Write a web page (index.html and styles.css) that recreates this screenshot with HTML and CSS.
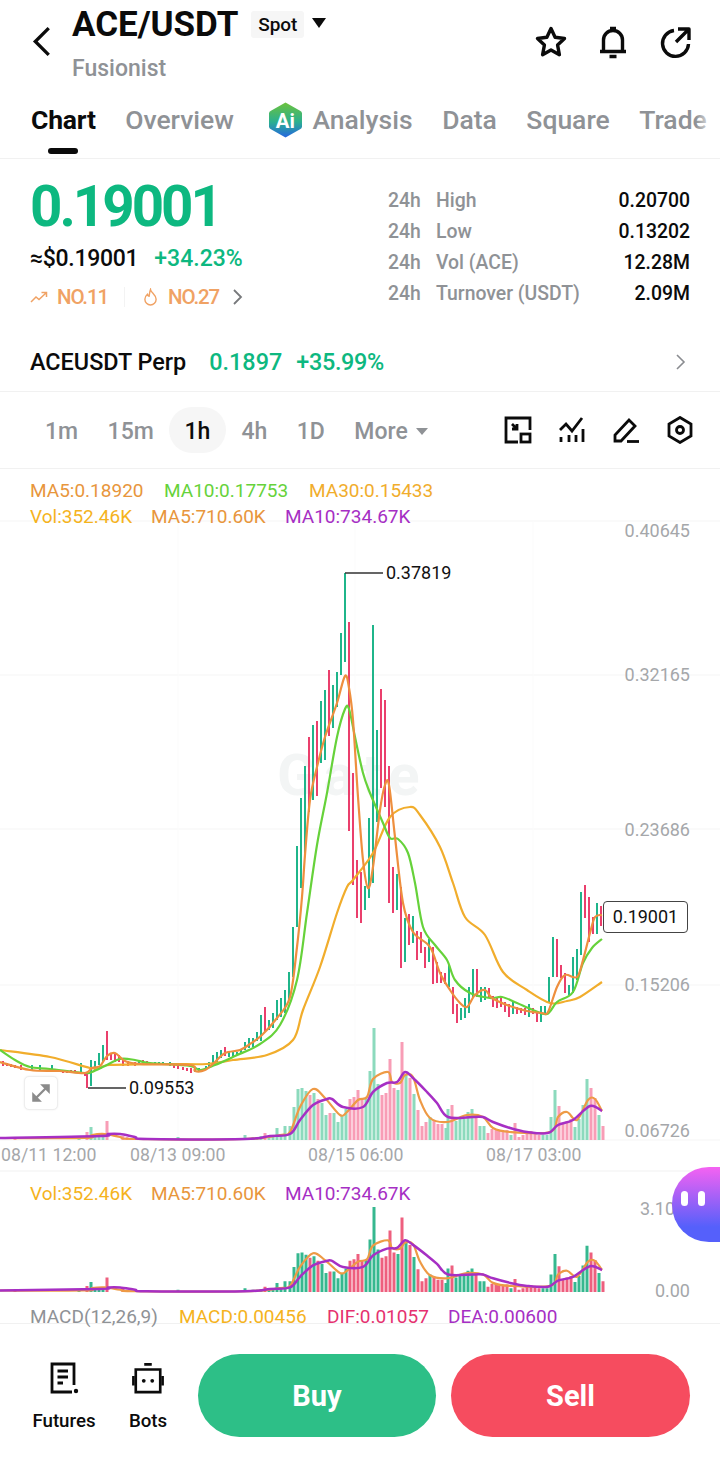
FILE: index.html
```html
<!DOCTYPE html>
<html lang="en">
<head>
  <meta charset="UTF-8">
  <meta name="viewport" content="width=device-width, initial-scale=1.0">
  <title>ACE/USDT</title>
  <link rel="stylesheet" href="styles.css">
</head>
<body>
  <header class="top-bar">
    <svg class="back" viewBox="0 0 18 30"><path d="M16 2 3 15l13 13"/></svg>
    <div class="pair">
      <div class="pair-line">
        <h1>ACE/USDT</h1>
        <span class="badge">Spot</span>
        <span class="caret"></span>
      </div>
      <div class="pair-name">Fusionist</div>
    </div>
    <div class="top-icons">
      <svg viewBox="0 0 34 34"><path d="M17 3.500l4.100 8.800 9.400 1.200-6.900 6.600 1.800 9.600-8.400-4.700-8.400 4.700 1.800-9.600-6.900-6.600 9.400-1.200z"/></svg>
      <svg viewBox="0 0 34 34"><path d="M4 26.500h26M7.500 26.500V15a9.500 9.500 0 0 1 19 0v11.500"/><path d="M14 3.500h6M13.500 31.500h7"/></svg>
      <svg viewBox="0 0 34 34"><path d="M16 5.500a13 13 0 1 0 14.500 13.500"/><path d="M20 4h11v11M30.500 4.500 18 17"/></svg>
    </div>
  </header>

  <nav class="tabs">
    <a class="tab active">Chart</a>
    <a class="tab">Overview</a>
    <a class="tab tab-ai">
      <svg class="ai-icon" viewBox="0 0 34 36">
        <defs>
          <linearGradient id="ai-grad" x1="0" y1="0" x2="0" y2="1">
            <stop offset="0" stop-color="#6cc23c"/>
            <stop offset=".55" stop-color="#2bb08f"/>
            <stop offset="1" stop-color="#2566e0"/>
          </linearGradient>
        </defs>
        <path class="ai-hex" d="M17 0l15 8.500a3 3 0 0 1 2 3v13a3 3 0 0 1-2 3L17 36 2 27.500a3 3 0 0 1-2-3v-13a3 3 0 0 1 2-3z"/>
        <text class="ai-text" x="7" y="26">Ai</text>
      </svg>
      Analysis
    </a>
    <a class="tab">Data</a>
    <a class="tab">Square</a>
    <a class="tab">Trade</a>
  </nav>

  <section class="summary">
    <div class="price-box">
      <div class="price">0.19001</div>
      <div class="price-sub"><span class="fiat">≈$0.19001</span><span class="change">+34.23%</span></div>
      <div class="ranks">
        <svg class="rank-icon" viewBox="0 0 18 14"><path d="M1 12l5-5 3 2.500L16 3M11.500 2.500H16.500V7"/></svg>
        <span>NO.11</span>
        <i class="rank-sep"></i>
        <svg class="rank-icon flame" viewBox="0 0 16 18"><path d="M8 1c.5 3.500 6 5.500 6 10.500a6 6 0 0 1-12 0c0-2.500 1.200-4.200 2.700-5.500.4 1.300 1 2 1.800 2.200C7 5.500 7 3.500 8 1z"/></svg>
        <span>NO.27</span>
        <svg class="rank-more" viewBox="0 0 12 18"><path d="M2 2l7 7-7 7"/></svg>
      </div>
    </div>
    <dl class="stats">
      <div class="stat"><span>24h</span><span>High</span><b>0.20700</b></div>
      <div class="stat"><span>24h</span><span>Low</span><b>0.13202</b></div>
      <div class="stat"><span>24h</span><span>Vol (ACE)</span><b>12.28M</b></div>
      <div class="stat"><span>24h</span><span>Turnover (USDT)</span><b>2.09M</b></div>
    </dl>
  </section>

  <section class="perp">
    <span class="perp-name">ACEUSDT Perp</span>
    <span class="perp-price">0.1897</span>
    <span class="perp-change">+35.99%</span>
    <svg class="perp-more" viewBox="0 0 12 18"><path d="M2 2l7 7-7 7"/></svg>
  </section>

  <section class="toolbar">
    <div class="intervals">
      <a>1m</a>
      <a>15m</a>
      <a class="on">1h</a>
      <a>4h</a>
      <a>1D</a>
      <a class="more">More<i></i></a>
    </div>
    <div class="tools">
      <svg viewBox="0 0 28 28"><path d="M14 26H2V2h24v12"/><path d="M8 8l5 5M13 8v5H8"/><rect x="17" y="18" width="9" height="8"/></svg>
      <svg viewBox="0 0 28 28"><path d="M2 14l6-6 6 7 10-13"/><path d="M3 21v5M11 19v7M18 19v7M25 13v13"/></svg>
      <svg viewBox="0 0 28 28"><path d="M3 25v-6L17 4l6 6L9 25z"/><path d="M15 25.500h12"/></svg>
      <svg viewBox="0 0 28 28"><path d="M14 1.500l11 6.500v12l-11 6.500L3 20V8z"/><circle cx="14" cy="14" r="3.500"/></svg>
    </div>
  </section>

  <section class="chart">
    <svg class="chart-svg" viewBox="0 469 720 855">
      <defs>
        <g id="vol">
          <path class="vol-up" d="M79 1140V1137M91 1140V1127M95 1140V1135M99 1140V1137M103 1140V1137M178 1140V1137M245 1140V1135M253 1140V1137M257 1140V1137M261 1140V1136M269 1140V1136M273 1140V1136M277 1140V1128M281 1140V1134M285 1140V1126M290 1140V1126M294 1140V1107M298 1140V1089M302 1140V1088M306 1140V1091M314 1140V1093M322 1140V1103M326 1140V1115M334 1140V1113M338 1140V1122M342 1140V1115M346 1140V1109M366 1140V1098M370 1140V1071M374 1140V1028M378 1140V1084M398 1140V1090M406 1140V1075M414 1140V1094M430 1140V1117M446 1140V1128M448 1140V1109M456 1140V1121M460 1140V1119M464 1140V1119M468 1140V1112M472 1140V1109M480 1140V1126M484 1140V1126M511 1140V1135M543 1140V1135M547 1140V1135M551 1140V1117M555 1140V1090M575 1140V1127M579 1140V1119M583 1140V1105M587 1140V1079M599 1140V1115"/>
          <path class="vol-down" d="M15 1140V1137M87 1140V1132M107 1140V1121M123 1140V1136M127 1140V1137M265 1140V1133M310 1140V1095M318 1140V1099M330 1140V1113M350 1140V1099M354 1140V1097M358 1140V1090M362 1140V1098M382 1140V1095M386 1140V1093M390 1140V1059M394 1140V1088M402 1140V1042M410 1140V1078M418 1140V1110M422 1140V1126M426 1140V1122M434 1140V1120M438 1140V1124M442 1140V1124M452 1140V1105M476 1140V1117M488 1140V1133M492 1140V1129M496 1140V1129M499 1140V1131M503 1140V1132M507 1140V1130M515 1140V1123M519 1140V1137M523 1140V1135M527 1140V1133M531 1140V1131M535 1140V1133M539 1140V1135M559 1140V1106M563 1140V1123M567 1140V1121M571 1140V1119M591 1140V1088M595 1140V1098M603 1140V1126"/>
          <polyline class="line vol-ma5" points="0,1138 85,1138 92,1135 105,1134 120,1137 135,1139 245,1139 280,1135 290,1132 300,1107 313,1089 325,1098 340,1115 347,1112 358,1100 367,1097 373,1079 388,1072 392,1082 400,1083 405,1075 413,1077 420,1100 430,1118 447,1122 467,1115 483,1117 493,1128 510,1132 550,1132 558,1117 567,1112 577,1120 588,1100 595,1099 602,1111"/>
          <polyline class="line vol-ma10" points="0,1138 100,1136 108,1134 120,1134 135,1137 147,1139 245,1139 270,1136 290,1134 300,1120 313,1105 327,1099 332,1099 343,1107 363,1107 373,1092 387,1083 397,1082 405,1072 413,1078 427,1092 437,1103 448,1117 473,1117 483,1117 493,1122 510,1128 527,1132 548,1133 558,1125 573,1120 590,1106 602,1111"/>
        </g>
      </defs>

      <path class="grid" d="M0 521H720M0 675H720M0 829H720M0 985H720M0 1140H720"/>
      <path class="grid-v" d="M178 521V1140M355 521V1140M533 521V1140"/>
      <path class="divider" d="M0 1171H720"/>
      <text class="watermark" x="277" y="795">Gate</text>

      <path class="up" d="M32 1065V1070M40 1065V1070M52 1065V1069M81 1063V1072M91 1060V1086M95 1061V1070M99 1053V1065M103 1045V1062M139 1061V1065M155 1062V1065M159 1062V1064M163 1062V1065M170 1062V1066M195 1068V1072M199 1068V1071M206 1066V1068M209 1062V1067M213 1055V1065M217 1052V1062M221 1050V1058M229 1052V1057M233 1052V1057M237 1052V1055M241 1049V1054M245 1042V1050M249 1038V1048M253 1038V1047M257 1032V1041M261 1015V1041M269 1020V1030M273 1013V1028M277 1000V1020M281 998V1017M285 990V1013M289 972V1000M293 927V977M297 846V927M301 798V888M305 766V855M313 725V800M321 701V763M325 690V760M333 685V728M337 672V707M341 633V675M345 573V662M365 886V910M369 818V898M373 625V883M377 730V822M397 874V910M405 918V962M413 916V943M429 939V962M449 965V987M461 1008V1020M465 998V1018M469 987V1013M473 969V997M481 987V1002M485 987V1000M513 1002V1014M529 1004V1017M541 1006V1022M545 1006V1015M549 977V1003M553 937V977M569 985V995M573 957V993M577 949V980M581 892V955M597 903V934"/>
      <path class="down" d="M3 1061V1066M7 1063V1066M11 1064V1067M15 1065V1068M21 1065V1070M63 1070V1073M67 1070V1073M71 1070V1073M75 1070V1073M85 1073V1076M87 1073V1088M107 1031V1060M111 1053V1060M115 1053V1062M119 1055V1062M123 1060V1066M128 1061V1066M135 1062V1066M143 1060V1065M147 1061V1064M174 1065V1068M178 1066V1069M183 1067V1070M187 1068V1071M191 1068V1073M225 1047V1056M265 1007V1032M309 737V812M317 721V796M329 670V736M349 622V831M353 773V885M357 860V918M361 872V923M381 689V788M385 700V807M389 766V903M393 867V913M401 887V968M409 914V945M417 931V960M421 932V953M425 947V968M433 947V984M437 962V983M441 972V983M445 973V984M453 987V1014M457 1004V1023M477 969V997M489 988V998M493 996V1007M497 998V1008M501 998V1007M505 1002V1012M509 1004V1017M517 1007V1014M521 1008V1013M525 1008V1015M533 1008V1014M537 1012V1022M557 939V977M561 965V978M565 973V993M585 885V918M589 897V942M593 917V934M601 906V926"/>

      <polyline class="line ma30" points="0,1050 50,1057 90,1068 100,1068 110,1065 167,1064 207,1064 233,1060 267,1055 293,1040 303,1010 320,967 337,913 347,887 353,880 373,853 390,817 410,807 420,815 440,847 453,883 465,917 485,935 503,972 527,990 550,1003 567,1001 580,997 602,982"/>
      <polyline class="line ma10" points="0,1050 15,1060 30,1067 50,1069 85,1073 92,1072 105,1066 120,1059 135,1060 150,1063 190,1066 200,1070 215,1065 235,1056 260,1044 280,1025 297,980 307,913 317,845 327,793 337,737 345,709 349,709 355,737 363,773 370,793 383,823 390,838 398,839 408,853 415,883 423,927 435,945 447,960 455,980 470,993 490,998 502,997 517,1003 533,1010 547,1014 557,1002 573,992 583,963 592,948 602,939"/>
      <polyline class="line ma5" points="0,1062 30,1070 60,1071 85,1073 92,1068 100,1066 107,1056 115,1053 125,1061 140,1064 190,1065 195,1071 205,1070 215,1062 225,1053 240,1050 250,1044 262,1035 277,1018 290,997 297,947 302,897 305,855 310,800 317,767 325,737 337,703 345,676 349,688 353,720 358,797 363,860 368,888 373,867 380,810 385,785 389,785 395,837 403,903 413,932 430,947 440,973 450,990 460,1003 467,1007 475,995 485,990 492,998 507,1005 527,1011 542,1013 548,1012 557,987 565,975 577,977 583,960 590,933 595,917 602,915"/>

      <use href="#vol" class="vol-main"/>
      <use href="#vol" class="vol-sub" transform="translate(0 425.600) scale(1 .76)"/>

      <path class="callout" d="M383 573H345M126 1088H88"/>
      <text class="label" x="386" y="579">0.37819</text>
      <text class="label" x="129" y="1094">0.09553</text>

      <text class="legend c-ma5" x="30" y="497">MA5:0.18920</text>
      <text class="legend c-ma10" x="164" y="497">MA10:0.17753</text>
      <text class="legend c-ma30" x="309" y="497">MA30:0.15433</text>
      <text class="legend c-vol" x="30" y="523">Vol:352.46K</text>
      <text class="legend c-ma5" x="151" y="523">MA5:710.60K</text>
      <text class="legend c-purple" x="285" y="523">MA10:734.67K</text>

      <text class="axis" x="690" y="537" text-anchor="end">0.40645</text>
      <text class="axis" x="690" y="681" text-anchor="end">0.32165</text>
      <text class="axis" x="690" y="836" text-anchor="end">0.23686</text>
      <text class="axis" x="690" y="991" text-anchor="end">0.15206</text>
      <text class="axis" x="690" y="1137" text-anchor="end">0.06726</text>

      <text class="axis time" x="1" y="1161">08/11 12:00</text>
      <text class="axis time" x="130" y="1161">08/13 09:00</text>
      <text class="axis time" x="308" y="1161">08/15 06:00</text>
      <text class="axis time" x="486" y="1161">08/17 03:00</text>

      <text class="legend c-vol" x="30" y="1200">Vol:352.46K</text>
      <text class="legend c-ma5" x="151" y="1200">MA5:710.60K</text>
      <text class="legend c-purple" x="285" y="1200">MA10:734.67K</text>
      <text class="axis" x="640" y="1215">3.10</text>
      <text class="axis" x="690" y="1297" text-anchor="end">0.00</text>

      <text class="legend c-grey" x="30" y="1323">MACD(12,26,9)</text>
      <text class="legend c-vol" x="179" y="1323">MACD:0.00456</text>
      <text class="legend c-pink" x="327" y="1323">DIF:0.01057</text>
      <text class="legend c-purple" x="448" y="1323">DEA:0.00600</text>
    </svg>

    <div class="last-price">0.19001</div>
    <button class="expand">
      <svg viewBox="0 0 20 20"><path d="M12 1.500h6.500V8zM8 18.500H1.500V12z"/><path d="M15 5 5 15"/></svg>
    </button>
    <div class="bubble"><i></i><i></i></div>
  </section>

  <footer class="actions">
    <a class="action">
      <svg viewBox="0 0 32 34"><path d="M26 24V3H4v28h20"/><path d="M9.500 10H20M9.500 16H20M9.500 22H15"/><circle cx="28" cy="30" r="2.200" class="dot"/></svg>
      Futures
    </a>
    <a class="action">
      <svg viewBox="0 0 34 34"><path d="M4 8h26v24H4z"/><path d="M13 2.500h8M1.500 15v10M32.500 15v10"/><circle cx="12.500" cy="20" r="2" class="dot"/><circle cx="21.500" cy="20" r="2" class="dot"/></svg>
      Bots
    </a>
    <button class="trade buy">Buy</button>
    <button class="trade sell">Sell</button>
  </footer>
  <script src="chart.js"></script>
</body>
</html>
```

FILE: styles.css
```css
:root {
  --green: #0db880;
  --grey: #8f9296;
  --orange: #f0a264;
  --border: #f1f1f1;
}
* {
  box-sizing: border-box;
}
body {
  margin: 0;
  width: 720px;
  height: 1467px;
  overflow: hidden;
  background: #fff;
  color: #0b0b0b;
  font-family: Roboto, "Liberation Sans", sans-serif;
}
a {
  text-decoration: none;
}

/* top bar */
.top-bar {
  height: 96px;
  display: flex;
  padding-left: 32px;
  position: relative;
}
.back {
  width: 19px;
  height: 31px;
  margin-top: 26px;
  fill: none;
  stroke: #0b0b0b;
  stroke-width: 3.200;
}
.pair {
  margin-left: 21px;
}
.pair-line {
  display: flex;
  align-items: center;
  height: 49px;
}
h1 {
  margin: 0;
  font-size: 35px;
  font-weight: 700;
  letter-spacing: -0.05px;
}
.badge {
  margin-left: 13px;
  width: 53px;
  height: 27px;
  background: #f6f6f6;
  border-radius: 3px;
  font-size: 19px;
  font-weight: 500;
  line-height: 27px;
  text-align: center;
}
.caret {
  margin-left: 8px;
  margin-top: -3px;
  border-left: 7.500px solid transparent;
  border-right: 7.500px solid transparent;
  border-top: 10px solid #0b0b0b;
}
.pair-name {
  margin-top: 6px;
  font-size: 23px;
  font-weight: 500;
  color: var(--grey);
}
.top-icons {
  margin-left: auto;
  margin-right: 28px;
  margin-top: 25px;
  display: flex;
  gap: 28px;
}
.top-icons svg {
  width: 34px;
  height: 34px;
  fill: none;
  stroke: #0b0b0b;
  stroke-width: 3.400;
  stroke-linejoin: round;
}

/* tabs */
.tabs {
  height: 63px;
  display: flex;
  align-items: flex-start;
  gap: 29.500px;
  padding: 6px 0 0 31px;
  border-bottom: 1px solid var(--border);
  position: relative;
  overflow: hidden;
  white-space: nowrap;
}
.tabs::after {
  content: "";
  position: absolute;
  right: 0;
  top: 0;
  bottom: 0;
  width: 24px;
  background: linear-gradient(to right, rgba(255, 255, 255, 0), #fff 80%);
}
.tab {
  font-size: 26.500px;
  font-weight: 500;
  line-height: 36px;
  color: var(--grey);
  position: relative;
}
.tab.active {
  color: #0b0b0b;
  font-weight: 700;
  letter-spacing: -0.2px;
}
.tab.active::after {
  content: "";
  position: absolute;
  left: 17px;
  top: 46px;
  width: 30px;
  height: 6px;
  border-radius: 3px;
  background: #0b0b0b;
}
.tab-ai {
  display: flex;
  align-items: center;
  gap: 10px;
  margin-left: 6px;
}
.ai-icon {
  width: 33px;
  height: 36px;
}
.ai-hex {
  fill: url(#ai-grad);
}
.ai-text {
  fill: #fff;
  font-size: 21px;
  font-weight: 700;
}

/* price summary */
.summary {
  height: 171px;
  display: flex;
  justify-content: space-between;
  padding: 0 30px;
}
.price {
  margin-top: 14px;
  font-size: 56.500px;
  font-weight: 700;
  line-height: 68px;
  letter-spacing: -3px;
  color: var(--green);
}
.price-sub {
  margin-top: 3px;
  display: flex;
  gap: 16px;
  font-size: 23px;
  line-height: 30px;
}
.fiat {
  font-weight: 500;
  letter-spacing: -0.3px;
}
.change {
  color: var(--green);
  font-weight: 500;
}
.ranks {
  margin-top: 8px;
  display: flex;
  align-items: center;
  height: 30px;
  color: var(--orange);
  font-size: 20.500px;
  font-weight: 500;
  letter-spacing: -1.100px;
}
.rank-icon {
  width: 18px;
  height: 14px;
  margin-right: 9px;
  fill: none;
  stroke: var(--orange);
  stroke-width: 1.500;
}
.flame {
  width: 15px;
  height: 18px;
  margin-right: 10px;
}
.rank-sep {
  width: 1px;
  height: 20px;
  background: #f3f3f3;
  margin: 0 18px 0 16px;
}
.rank-more {
  width: 12px;
  height: 18px;
  margin-left: 13px;
  fill: none;
  stroke: #77797c;
  stroke-width: 1.800;
}
.stats {
  margin: 26px 0 0;
  width: 302px;
}
.stat {
  height: 31px;
  display: flex;
  align-items: center;
  font-size: 19.400px;
  font-weight: 500;
  color: var(--grey);
}
.stat span:first-child {
  width: 48px;
}
.stat b {
  margin-left: auto;
  font-weight: 500;
  color: #0b0b0b;
}

/* perp row */
.perp {
  height: 62px;
  display: flex;
  align-items: center;
  padding: 3px 30px 0;
  border-bottom: 1px solid var(--border);
  font-size: 23.400px;
  font-weight: 500;
}
.perp-price {
  margin-left: 23px;
  color: var(--green);
}
.perp-change {
  margin-left: 14px;
  color: var(--green);
  letter-spacing: -0.3px;
}
.perp-more {
  margin-left: auto;
  margin-right: 3px;
  width: 12px;
  height: 18px;
  fill: none;
  stroke: #8a8c90;
  stroke-width: 1.600;
}

/* interval toolbar */
.toolbar {
  height: 77px;
  display: flex;
  align-items: center;
  justify-content: space-between;
  padding: 0 26px 0 30.250px;
  border-bottom: 1px solid var(--border);
}
.intervals {
  display: flex;
  align-items: center;
  font-size: 23px;
  font-weight: 500;
  color: var(--grey);
}
.intervals a {
  height: 46px;
  line-height: 50px;
  padding: 0 14.750px;
}
.intervals a.on {
  color: #0b0b0b;
  background: #f6f6f6;
  border-radius: 23px;
  padding: 0 16px;
  margin-right: 0.250px;
}
.more i {
  display: inline-block;
  margin-left: 8px;
  vertical-align: 4px;
  border-left: 6px solid transparent;
  border-right: 6px solid transparent;
  border-top: 7px solid var(--grey);
}
.tools {
  display: flex;
  gap: 26px;
}
.tools svg {
  width: 28px;
  height: 28px;
  fill: none;
  stroke: #0b0b0b;
  stroke-width: 2.800;
}

/* chart */
.chart {
  position: relative;
  height: 855px;
  border-bottom: 1px solid var(--border);
}
.chart-svg {
  display: block;
  width: 720px;
  height: 855px;
  overflow: visible;
  font-family: Roboto, "Liberation Sans", sans-serif;
}
.grid {
  stroke: #f5f5f5;
  stroke-width: 1;
}
.grid-v {
  stroke: #fbfbfb;
  stroke-width: 1;
}
.divider {
  stroke: var(--border);
  stroke-width: 1;
}
.watermark {
  font-size: 58px;
  font-weight: 700;
  letter-spacing: 7px;
  fill: #f3f5f5;
}
.up,
.down {
  fill: none;
  stroke-width: 2;
}
.up {
  stroke: #1fb58a;
}
.down {
  stroke: #ea3f6c;
}
.line {
  fill: none;
  stroke-width: 2.200;
  stroke-linejoin: round;
  vector-effect: non-scaling-stroke;
}
.ma5 {
  stroke: #ee8f3e;
}
.ma10 {
  stroke: #66d23a;
}
.ma30 {
  stroke: #f1ad2c;
}
.vol-up,
.vol-down {
  fill: none;
  stroke-width: 3;
}
.vol-up {
  stroke: var(--vol-up);
}
.vol-down {
  stroke: var(--vol-down);
}
.vol-main {
  --vol-up: #8cdabd;
  --vol-down: #f89db6;
}
.vol-sub {
  --vol-up: #36b88f;
  --vol-down: #ee5f7e;
}
.vol-ma5 {
  stroke: #ee9a45;
}
.vol-ma10 {
  stroke: #a62fc4;
  stroke-width: 2.500;
}
.callout {
  stroke: #333;
  stroke-width: 1.500;
  fill: none;
}
.label {
  font-size: 18px;
  fill: #111;
}
.legend {
  font-size: 19px;
}
.axis {
  font-size: 18px;
  fill: #a5a7aa;
}
.axis.time {
  font-size: 17.700px;
}
.c-ma5 {
  fill: #e8963c;
}
.c-ma10 {
  fill: #66d23a;
}
.c-ma30 {
  fill: #f1ad2c;
}
.c-vol {
  fill: #f5b31d;
}
.c-purple {
  fill: #a62fc4;
}
.c-pink {
  fill: #e5316f;
}
.c-grey {
  fill: #8f9296;
}
.last-price {
  position: absolute;
  left: 603px;
  top: 432px;
  width: 85px;
  height: 32px;
  border: 1.500px solid #444;
  border-radius: 4px;
  background: #fff;
  font-size: 18px;
  line-height: 29px;
  text-align: center;
  color: #111;
}
.expand {
  position: absolute;
  left: 24px;
  top: 607px;
  width: 34px;
  height: 34px;
  padding: 7px;
  background: #fff;
  border: 1px solid #eee;
  border-radius: 5px;
  box-shadow: 0 0 2px rgba(0, 0, 0, 0.08);
}
.expand svg {
  display: block;
  fill: #8b8b8b;
  stroke: #8b8b8b;
  stroke-width: 2.500;
}
.bubble {
  position: absolute;
  right: 0;
  top: 698px;
  width: 48px;
  height: 75px;
  border-radius: 37px 0 0 37px;
  background: linear-gradient(to bottom, #f562f2, #5560fb 80%);
  display: flex;
  gap: 10px;
  padding: 24px 0 0 9px;
}
.bubble i {
  width: 7px;
  height: 15px;
  border-radius: 4px;
  background: #fff;
}

/* bottom actions */
.actions {
  height: 142px;
  display: flex;
  align-items: flex-start;
  padding-top: 30px;
}
.action {
  display: flex;
  flex-direction: column;
  align-items: center;
  font-size: 18.700px;
  font-weight: 500;
  color: #0b0b0b;
  width: 84px;
}
.action:first-child {
  margin-left: 22px;
}
.action svg {
  width: 32px;
  height: 34px;
  margin-top: 7px;
  margin-bottom: 15px;
  fill: none;
  stroke: #0b0b0b;
  stroke-width: 2.800;
}
.action .dot {
  fill: #0b0b0b;
  stroke: none;
}
.trade {
  height: 83px;
  border: none;
  border-radius: 42px;
  color: #fff;
  font-family: inherit;
  font-size: 29px;
  font-weight: 700;
}
.buy {
  width: 238px;
  margin-left: 8px;
  background: #2dbf87;
}
.sell {
  width: 239px;
  margin-left: 15px;
  background: #f64c5f;
}
```

FILE: chart.js
```js
// turn the moving average polylines into smooth curves
document.querySelectorAll('polyline.line').forEach(function (line) {
  const pts = line.getAttribute('points').trim().split(' ').map(function (p) {
    return p.split(',').map(Number);
  });
  let d = 'M' + pts[0].join(' ');
  for (let i = 0; i < pts.length - 1; i++) {
    const p0 = pts[i - 1] || pts[i];
    const p1 = pts[i];
    const p2 = pts[i + 1];
    const p3 = pts[i + 2] || p2;
    const c1x = p1[0] + (p2[0] - p0[0]) / 6;
    const c1y = p1[1] + (p2[1] - p0[1]) / 6;
    const c2x = p2[0] - (p3[0] - p1[0]) / 6;
    const c2y = p2[1] - (p3[1] - p1[1]) / 6;
    d += 'C' + [c1x, c1y, c2x, c2y, p2[0], p2[1]].map(function (n) {
      return n.toFixed(1);
    }).join(' ');
  }
  const path = document.createElementNS('http://www.w3.org/2000/svg', 'path');
  path.setAttribute('class', line.getAttribute('class'));
  path.setAttribute('d', d);
  line.replaceWith(path);
});
```
